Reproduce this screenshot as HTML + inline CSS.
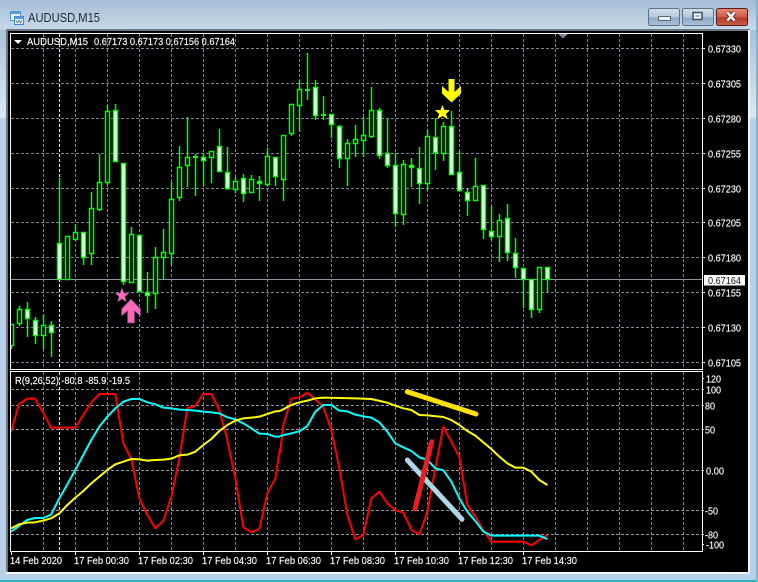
<!DOCTYPE html>
<html><head><meta charset="utf-8"><title>AUDUSD,M15</title>
<style>
html,body{margin:0;padding:0;background:#b9d1e8}
svg{display:block}
text{font-family:"Liberation Sans",sans-serif;font-size:10.5px;fill:#fff;stroke:#fff;stroke-width:.15px}
</style></head>
<body>
<svg width="758" height="582" viewBox="0 0 758 582" xmlns="http://www.w3.org/2000/svg">
<defs>
<linearGradient id="tb" x1="0" y1="0" x2="0" y2="1"><stop offset="0" stop-color="#a3bfd8"/><stop offset=".05" stop-color="#a8c3da"/><stop offset=".2" stop-color="#dbe7f3"/><stop offset=".205" stop-color="#b9d1e8"/><stop offset="1" stop-color="#b9d1e8"/></linearGradient>
<linearGradient id="top" x1="0" y1="0" x2="0" y2="1"><stop offset="0" stop-color="#a3bdd5"/><stop offset="1" stop-color="#c8dae9"/></linearGradient>
<linearGradient id="bb" x1="0" y1="0" x2="0" y2="1"><stop offset="0" stop-color="#d3e0ec"/><stop offset=".5" stop-color="#b3c8dc"/><stop offset=".55" stop-color="#8fabc6"/><stop offset="1" stop-color="#a9c2da"/></linearGradient>
<linearGradient id="rb" x1="0" y1="0" x2="0" y2="1"><stop offset="0" stop-color="#e58a78"/><stop offset=".5" stop-color="#d25a45"/><stop offset=".55" stop-color="#b23a28"/><stop offset="1" stop-color="#c9604a"/></linearGradient>
<clipPath id="c1"><rect x="11" y="34" width="691" height="335"/></clipPath>
<clipPath id="c2"><rect x="11" y="372" width="691" height="179"/></clipPath>
</defs>

<rect width="758" height="582" fill="url(#tb)"/>
<rect width="758" height="30" fill="url(#top)"/>
<rect x="0" y="580" width="758" height="2" fill="#2fb3c4"/>
<rect x="756" y="0" width="2" height="582" fill="#7fb6c9"/>

<!-- title icon -->
<rect x="10.5" y="11.5" width="10" height="9" fill="#e8f2fb" stroke="#5b9bd5"/>
<rect x="10.5" y="11.5" width="10" height="2.5" fill="#5b9bd5"/>
<rect x="14.5" y="16.5" width="9" height="8" fill="#f4f9fd" stroke="#3f86c6"/>
<rect x="14.5" y="16.5" width="9" height="2.5" fill="#5b9bd5"/>
<path d="M16 20l1.5 3 1.5-3 1.5 3 1.5-3" fill="none" stroke="#2c6fb0" stroke-width=".8"/>
<text x="28" y="22" style="font-size:12.5px;fill:#1d2b3a;stroke:none" textLength="72" lengthAdjust="spacingAndGlyphs">AUDUSD,M15</text>

<!-- window buttons -->
<rect x="648.5" y="8.5" width="31" height="17" rx="2" fill="url(#bb)" stroke="#5e728a"/>
<rect x="658.5" y="16.5" width="12" height="4" fill="#eef2f6" stroke="#56677a"/>
<rect x="682.5" y="8.5" width="31" height="17" rx="2" fill="url(#bb)" stroke="#5e728a"/>
<rect x="693" y="12.5" width="9" height="7" fill="#eef2f6" stroke="#3f4f60" stroke-width="1.5"/>
<rect x="695.5" y="15" width="4" height="2" fill="#9db4ca"/>
<rect x="716.5" y="8.5" width="31" height="17" rx="2" fill="url(#rb)" stroke="#5a1e1c"/>
<path d="M727.5 12.5l7 8M734.5 12.5l-7 8" stroke="#4a2a28" stroke-width="4.5" fill="none"/>
<path d="M727.5 12.5l7 8M734.5 12.5l-7 8" stroke="#f4ecea" stroke-width="2.8" fill="none"/>

<!-- chart frame -->
<rect x="6" y="29" width="744" height="545" fill="#6a7683"/>
<rect x="748" y="30" width="2" height="544" fill="#f2f5f8"/>
<rect x="6" y="572" width="744" height="2" fill="#f2f5f8"/>
<rect x="8" y="31" width="740" height="541" fill="#000"/>

<g shape-rendering="crispEdges" fill="none">
<!-- main grid -->
<path stroke="#778899" stroke-dasharray="3 2" d="M11 48.5H702M11 83.5H702M11 118.5H702M11 153.5H702M11 188.5H702M11 222.5H702M11 257.5H702M11 292.5H702M11 327.5H702M11 362.5H702"/>
<path stroke="#778899" stroke-dasharray="3 2" d="M43.5 34V369M75.5 34V369M107.5 34V369M139.5 34V369M171.5 34V369M203.5 34V369M235.5 34V369M267.5 34V369M299.5 34V369M331.5 34V369M363.5 34V369M395.5 34V369M427.5 34V369M459.5 34V369M491.5 34V369M523.5 34V369M555.5 34V369M587.5 34V369M619.5 34V369M651.5 34V369M683.5 34V369"/>
<path stroke="#fff" stroke-dasharray="3 2" d="M59.5 34V369"/>
<path stroke="#8a97a5" d="M11 279.5H702"/>

<!-- candles -->
<g clip-path="url(#c1)" shape-rendering="auto">
<path stroke="#00ff00" stroke-width="1.5" d="M11.5 324V349M19.5 306V326M27.5 302V337M35.5 317V344M43.5 315V349M51.5 321V357M59.5 178V279M75.5 224V239M83.5 232V265M91.5 192V265M99.5 154V211M107.5 105V185M115.5 104V161M123.5 163V285M131.5 227V282M147.5 272V313M155.5 247V309M163.5 229V279M171.5 182V265M179.5 146V201M187.5 117V187M195.5 154V196M203.5 153V186M211.5 151V183M219.5 129V171M227.5 147V190M235.5 177V193M243.5 174V202M251.5 175V192M259.5 176V201M267.5 148V186M275.5 157V186M283.5 135V201M291.5 104V136M299.5 80V132M307.5 53V100M315.5 80V120M323.5 96V120M331.5 114V138M339.5 125V168M347.5 139V186M355.5 125V157M363.5 117V157M371.5 87V138M379.5 108V159M387.5 118V168M395.5 153V227M403.5 160V225M411.5 158V187M419.5 147V204M427.5 130V190M435.5 118V170M443.5 122V161M451.5 111V174M459.5 151V192M467.5 188V216M475.5 158V200M483.5 185V239M491.5 206V240M499.5 214V262M507.5 204V261M515.5 238V278M523.5 268V308M531.5 279V318M539.5 267V313M547.5 267V292"/>
<path stroke="#00ff00" stroke-width="2" d="M193 157H198M305 90H310M321 115H326"/>
<path stroke="#00ff00" stroke-width="1.5" fill="#000" d="M9.5 324.5h4V345.5h-4zM17.5 309.5h4V323.5h-4zM41.5 325.5h4V335.5h-4zM65.5 236.5h4V279.5h-4zM73.5 232.5h4V239.5h-4zM89.5 208.5h4V253.5h-4zM97.5 182.5h4V209.5h-4zM105.5 111.5h4V182.5h-4zM129.5 234.5h4V282.5h-4zM153.5 257.5h4V293.5h-4zM161.5 252.5h4V257.5h-4zM169.5 199.5h4V253.5h-4zM177.5 167.5h4V197.5h-4zM185.5 157.5h4V165.5h-4zM209.5 151.5h4V157.5h-4zM233.5 181.5h4V189.5h-4zM249.5 179.5h4V192.5h-4zM265.5 156.5h4V184.5h-4zM281.5 135.5h4V179.5h-4zM289.5 104.5h4V133.5h-4zM297.5 89.5h4V105.5h-4zM345.5 143.5h4V158.5h-4zM353.5 139.5h4V143.5h-4zM361.5 135.5h4V140.5h-4zM369.5 110.5h4V136.5h-4zM401.5 164.5h4V214.5h-4zM425.5 136.5h4V183.5h-4zM441.5 126.5h4V153.5h-4zM473.5 186.5h4V200.5h-4zM497.5 220.5h4V236.5h-4zM537.5 267.5h4V309.5h-4z"/>
<path stroke="#00ff00" stroke-width="1.5" fill="#fff" d="M25.5 309.5h4V318.5h-4zM33.5 320.5h4V335.5h-4zM49.5 325.5h4V332.5h-4zM57.5 243.5h4V279.5h-4zM81.5 232.5h4V257.5h-4zM113.5 110.5h4V161.5h-4zM121.5 163.5h4V281.5h-4zM137.5 235.5h4V291.5h-4zM145.5 292.5h4V295.5h-4zM201.5 157.5h4V160.5h-4zM217.5 146.5h4V171.5h-4zM225.5 172.5h4V188.5h-4zM241.5 178.5h4V193.5h-4zM257.5 181.5h4V183.5h-4zM273.5 157.5h4V176.5h-4zM313.5 87.5h4V115.5h-4zM329.5 114.5h4V124.5h-4zM337.5 126.5h4V158.5h-4zM377.5 110.5h4V155.5h-4zM385.5 153.5h4V165.5h-4zM393.5 165.5h4V213.5h-4zM409.5 165.5h4V167.5h-4zM417.5 168.5h4V183.5h-4zM433.5 137.5h4V152.5h-4zM449.5 126.5h4V174.5h-4zM457.5 172.5h4V190.5h-4zM465.5 192.5h4V200.5h-4zM481.5 185.5h4V229.5h-4zM489.5 231.5h4V236.5h-4zM505.5 218.5h4V252.5h-4zM513.5 253.5h4V267.5h-4zM521.5 268.5h4V279.5h-4zM529.5 279.5h4V309.5h-4zM545.5 267.5h4V279.5h-4z"/>
</g>

<!-- indicator grid -->
<path stroke="#778899" stroke-dasharray="3 2" d="M43.5 372V551M75.5 372V551M107.5 372V551M139.5 372V551M171.5 372V551M203.5 372V551M235.5 372V551M267.5 372V551M299.5 372V551M331.5 372V551M363.5 372V551M395.5 372V551M427.5 372V551M459.5 372V551M491.5 372V551M523.5 372V551M555.5 372V551M587.5 372V551M619.5 372V551M651.5 372V551M683.5 372V551"/>
<path stroke="#fff" stroke-dasharray="3 2" d="M59.5 372V551"/>
<path stroke="#8f9aa6" stroke-dasharray="3 2" d="M11 389.5H702M11 405.5H702M11 429.5H702M11 470.5H702M11 510.5H702M11 534.5H702"/>
</g>

<!-- objects: main -->
<polygon points="122,288 124,293 129,293 125,296.5 126.5,302 122,299 117.5,302 119,296.5 115,293 120,293" fill="#ff69b4" stroke="#5a3a8a" stroke-width=".5"/>
<polygon points="131,299 140.5,309 140.5,316 134.5,311 134.5,323 127.5,323 127.5,311 121.5,316 121.5,309" fill="#ff69b4" stroke="#6a3a8a" stroke-width=".7"/>
<polygon points="442.5,105 444.5,110 450,110 446,114 447.5,119 442.5,116 437.5,119 439,114 435,110 440.5,110" fill="#ffff00"/>
<polygon points="448.5,79 454.5,79 454.5,92 461,86 461,93.5 451.5,102.5 442,93.5 442,86 448.5,92" fill="#ffff00"/>

<!-- indicator lines -->
<g clip-path="url(#c2)" fill="none" stroke-linejoin="round">
<g transform="translate(0,365) scale(.33333)" stroke-width="6">
<polyline stroke="#f00" points="33,200 57,117 81,101 105,101 129,142 153,188 226,188 250,150 274,112 298,87 346,87 370,235 394,282 418,400 442,450 466,490 490,468 514,395 538,280 562,130 586,122 610,87 634,87 658,135 682,225 706,340 730,487 754,502 778,492 802,385 826,340 840,250"/>
<polyline stroke="#0ff" points="33,500 57,483 81,465 105,459 129,459 153,449 178,400 202,358 226,315 250,270 274,225 298,185 322,155 346,130 370,110 394,102 418,102 442,112 466,118 490,128 514,130 538,134 562,135 586,137 610,140 634,142 658,145 682,157 706,163 730,175 754,190 778,206 802,207 826,215 840,215"/>
<polyline stroke="#ff0" points="33,490 57,478 81,473 105,472 129,467 153,460 178,445 202,420 226,398 250,378 274,355 298,335 322,315 346,298 370,290 394,282 418,283 442,287 466,285 490,284 514,281 538,271 562,269 586,260 610,240 634,222 658,198 682,180 706,167 730,160 754,158 778,155 802,147 826,139 840,138"/>
</g>
<g transform="translate(280,365) scale(.33333)" stroke-width="6">
<polyline stroke="#f00" points="0,265 10,180 34,101 58,97 82,83 106,104 130,125 154,195 178,310 202,450 226,523 250,510 274,400 298,380 322,415 346,436 370,443 394,494 418,508 442,440 466,310 490,185 514,230 538,275 562,420 586,455 610,495 634,530 730,530 754,541 778,525 802,510"/>
<polyline stroke="#0ff" points="0,213 34,205 58,199 82,183 106,140 130,120 154,120 178,137 202,139 226,149 250,154 274,158 298,172 322,200 346,235 370,247 394,258 418,277 442,285 466,310 490,316 514,350 538,400 562,440 586,468 610,500 634,512 778,512 802,522"/>
<polyline stroke="#ff0" points="0,138 34,120 58,112 82,107 106,100 130,98 226,100 274,102 322,113 346,122 370,130 394,135 418,150 442,151 490,156 514,165 538,180 562,198 586,212 610,232 634,252 658,275 682,295 706,308 730,308 754,320 778,345 802,360"/>
</g>
<line x1="407.3" y1="391.7" x2="476" y2="414" stroke="#ffe000" stroke-width="5" stroke-linecap="round"/>
<line x1="407.3" y1="460" x2="462" y2="519.3" stroke="#add8e6" stroke-width="5" stroke-linecap="round"/>
<line x1="431.7" y1="441.7" x2="415" y2="509" stroke="#ed1c24" stroke-width="5" stroke-linecap="round"/>
</g>

<g shape-rendering="crispEdges" fill="none" stroke="#fff">
<path d="M10.5 33.5H702.5V369.5H10.5zM10.5 371.5H702.5V551.5H10.5z"/>
<path d="M702 48.5h3M702 83.5h3M702 118.5h3M702 153.5h3M702 188.5h3M702 222.5h3M702 257.5h3M702 292.5h3M702 327.5h3M702 362.5h3"/>
<path d="M702 389.5h2M702 405.5h2M702 429.5h2M702 470.5h2M702 510.5h2M702 534.5h2M702 378.5h2M702 544.5h2"/>
<path d="M11.5 552v3M75.5 552v3M139.5 552v3M203.5 552v3M267.5 552v3M331.5 552v3M395.5 552v3M459.5 552v3M523.5 552v3"/>
</g>

<polygon points="558,34 568,34 563,38.5" fill="#778899"/>
<polygon points="14,40 22,40 18,44" fill="#fff"/>

<!-- header text -->
<text x="27" y="45" textLength="61" lengthAdjust="spacingAndGlyphs">AUDUSD,M15</text>
<text x="94" y="45" textLength="141" lengthAdjust="spacingAndGlyphs">0.67173 0.67173 0.67156 0.67164</text>
<text x="15" y="384" textLength="115" lengthAdjust="spacingAndGlyphs">R(9,26,52) -80.8 -85.9 -19.5</text>

<!-- price axis -->
<g>
<text x="708" y="52.5" textLength="33" lengthAdjust="spacingAndGlyphs">0.67330</text>
<text x="708" y="87.5" textLength="33" lengthAdjust="spacingAndGlyphs">0.67305</text>
<text x="708" y="122.5" textLength="33" lengthAdjust="spacingAndGlyphs">0.67280</text>
<text x="708" y="157.5" textLength="33" lengthAdjust="spacingAndGlyphs">0.67255</text>
<text x="708" y="192.5" textLength="33" lengthAdjust="spacingAndGlyphs">0.67230</text>
<text x="708" y="226.5" textLength="33" lengthAdjust="spacingAndGlyphs">0.67205</text>
<text x="708" y="261.5" textLength="33" lengthAdjust="spacingAndGlyphs">0.67180</text>
<text x="708" y="296.5" textLength="33" lengthAdjust="spacingAndGlyphs">0.67155</text>
<text x="708" y="331.5" textLength="33" lengthAdjust="spacingAndGlyphs">0.67130</text>
<text x="708" y="366.5" textLength="33" lengthAdjust="spacingAndGlyphs">0.67105</text>
</g>
<rect x="704" y="275" width="41" height="10.5" fill="#fff"/>
<text x="708" y="284" textLength="33" lengthAdjust="spacingAndGlyphs" style="fill:#111;stroke:none">0.67164</text>

<!-- indicator axis -->
<g>
<text x="706" y="382.5" textLength="15" lengthAdjust="spacingAndGlyphs">120</text>
<text x="706" y="393.5" textLength="15" lengthAdjust="spacingAndGlyphs">100</text>
<text x="705" y="409.5" textLength="10" lengthAdjust="spacingAndGlyphs">80</text>
<text x="705" y="433.5" textLength="10" lengthAdjust="spacingAndGlyphs">50</text>
<text x="706" y="474.5" textLength="18" lengthAdjust="spacingAndGlyphs">0.00</text>
<text x="705" y="514.5" textLength="13" lengthAdjust="spacingAndGlyphs">-50</text>
<text x="705" y="538.5" textLength="13" lengthAdjust="spacingAndGlyphs">-80</text>
<text x="706" y="548.5" textLength="18" lengthAdjust="spacingAndGlyphs">-100</text>
</g>

<!-- time axis -->
<g>
<text x="10" y="564" textLength="52" lengthAdjust="spacingAndGlyphs">14 Feb 2020</text>
<text x="74" y="564" textLength="55" lengthAdjust="spacingAndGlyphs">17 Feb 00:30</text>
<text x="138" y="564" textLength="55" lengthAdjust="spacingAndGlyphs">17 Feb 02:30</text>
<text x="202" y="564" textLength="55" lengthAdjust="spacingAndGlyphs">17 Feb 04:30</text>
<text x="266" y="564" textLength="55" lengthAdjust="spacingAndGlyphs">17 Feb 06:30</text>
<text x="330" y="564" textLength="55" lengthAdjust="spacingAndGlyphs">17 Feb 08:30</text>
<text x="394" y="564" textLength="55" lengthAdjust="spacingAndGlyphs">17 Feb 10:30</text>
<text x="458" y="564" textLength="55" lengthAdjust="spacingAndGlyphs">17 Feb 12:30</text>
<text x="522" y="564" textLength="55" lengthAdjust="spacingAndGlyphs">17 Feb 14:30</text>
</g>
</svg>
</body></html>
